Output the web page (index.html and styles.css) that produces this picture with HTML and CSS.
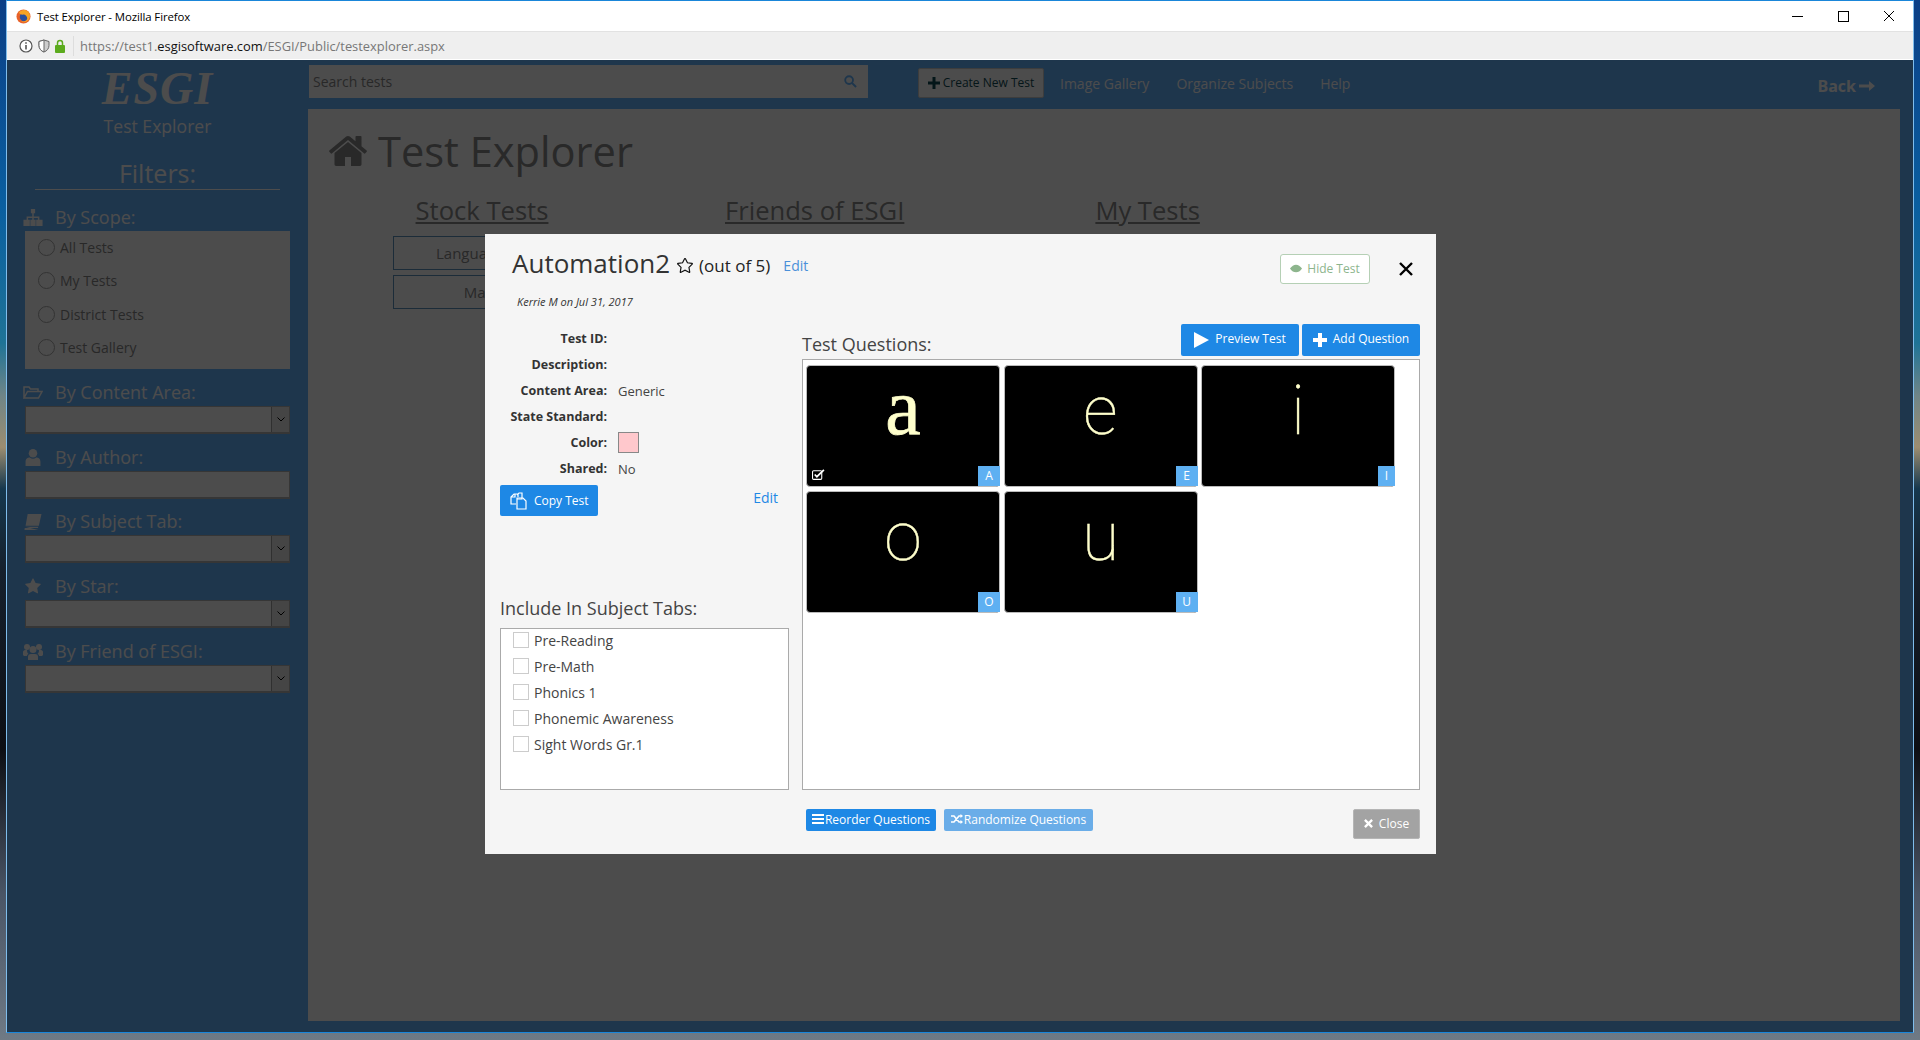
FILE: index.html
```html
<!DOCTYPE html>
<html lang="en">
  <head>
    <meta charset="UTF-8" />
    <meta name="viewport" content="width=device-width, initial-scale=1.0" />
    <title>Test Explorer</title>
    <link rel="stylesheet" href="styles.css">
  </head>
  <body>
    <div class="browser">
      <div class="title-bar">
        <svg class="ff-logo" viewBox="0 0 16 16"><circle cx="8" cy="8" r="7.5" fill="#e8622a"/><circle cx="8.500" cy="8.500" r="4.500" fill="#2a4f9e"/><path d="M3 4c2-3 7-4 10-1 2 2 3 6 0 9-2 2-5 3-8 1 3 1 6 0 7-3 0-3-3-5-5-4-2 0-3-1-4-2z" fill="#f7a325"/></svg>
        <span class="title-text">Test Explorer - Mozilla Firefox</span>
        <div class="win-controls">
          <span class="win-min"></span>
          <span class="win-max"></span>
          <svg class="win-close" viewBox="0 0 10 10"><path d="M0 0l10 10M10 0L0 10" stroke="#000" fill="none"/></svg>
        </div>
      </div>
      <div class="url-bar">
        <svg class="url-icon" viewBox="0 0 14 14" width="14" height="14"><circle cx="7" cy="7" r="6" fill="#fff" stroke="#555" stroke-width="1.200"/><path d="M7 6v4.500M7 3.200v1.500" stroke="#555" stroke-width="1.600"/></svg>
        <svg class="url-icon" viewBox="0 0 12 14" width="12" height="14"><path d="M6 1l5 1.500v4c0 3-2 5.500-5 6.500-3-1-5-3.500-5-6.500v-4z" fill="#ccc" stroke="#666"/><path d="M6 1v12c-3-1-5-3.500-5-6.500v-4z" fill="#fff" stroke="#666"/></svg>
        <svg class="url-icon" viewBox="0 0 10 14" width="10" height="14"><path d="M2.500 6V4a2.500 2.500 0 0 1 5 0v2" fill="none" stroke="#5cab1e" stroke-width="1.500"/><rect y="6" width="10" height="8" rx="1" fill="#5cab1e"/></svg>
        <span class="url-sep"></span>
        <span class="url-text">https://test1.<b>esgisoftware.com</b>/ESGI/Public/testexplorer.aspx</span>
      </div>

      <div class="page">
        <aside class="sidebar">
          <div class="logo">ESGI</div>
          <div class="logo-sub">Test Explorer</div>
          <div class="filters-title">Filters:</div>

          <div class="filter-label filter-first">
            <svg class="f-icon" viewBox="0 0 18 16"><path d="M7 0h4v4H7zM8.300 4h1.400v3H15v3h-1.400V8.400H9.700V10H8.300V8.400H4.400V10H3V7h5.300zM0 10h6v6H0zM6.500 10h5v6h-5zM12 10h6v6h-6z"/></svg>
            By Scope:
          </div>
          <div class="scope-panel">
            <label class="radio-row"><span class="radio"></span>All Tests</label>
            <label class="radio-row"><span class="radio"></span>My Tests</label>
            <label class="radio-row"><span class="radio"></span>District Tests</label>
            <label class="radio-row"><span class="radio"></span>Test Gallery</label>
          </div>

          <div class="filter-label">
            <svg class="f-icon" viewBox="0 0 20 15"><path d="M1 13V2h5l1.500 2H15v2.500M1 13l3.500-6.500H19L15.500 13z" fill="none" stroke="#fff" stroke-width="1.500"/></svg>
            By Content Area:
          </div>
          <div class="select"><span class="select-arrow"><svg viewBox="0 0 8 5" width="8" height="5"><path d="M.5.500L4 4 7.500.500" fill="none" stroke="#000" stroke-width="1"/></svg></span></div>

          <div class="filter-label">
            <svg class="f-icon" viewBox="0 0 16 16"><circle cx="8" cy="4" r="4"/><path d="M1 16v-4c0-3 2-4 4-4 2 1.500 4 1.500 6 0 2 0 4 1 4 4v4z"/></svg>
            By Author:
          </div>
          <div class="text-field"></div>

          <div class="filter-label">
            <svg class="f-icon" viewBox="0 0 18 16"><path d="M4 1h13l-2.500 11H2zM1.500 13H14l-.3 1H1.200l-.2 2h13" fill="#fff"/></svg>
            By Subject Tab:
          </div>
          <div class="select"><span class="select-arrow"><svg viewBox="0 0 8 5" width="8" height="5"><path d="M.5.500L4 4 7.500.500" fill="none" stroke="#000" stroke-width="1"/></svg></span></div>

          <div class="filter-label">
            <svg class="f-icon" viewBox="0 0 1792 1792"><path d="M1728 647q0 22-26 48l-363 354 86 500q1 7 1 20 0 21-10.500 35.500t-30.500 14.500q-19 0-40-12l-449-236-449 236q-22 12-40 12-21 0-31.500-14.500t-10.500-35.500q0-6 2-20l86-500-364-354q-25-27-25-48 0-37 56-46l502-73 225-455q19-41 49-41t49 41l225 455 502 73q56 9 56 46z"/></svg>
            By Star:
          </div>
          <div class="select"><span class="select-arrow"><svg viewBox="0 0 8 5" width="8" height="5"><path d="M.5.500L4 4 7.500.500" fill="none" stroke="#000" stroke-width="1"/></svg></span></div>

          <div class="filter-label">
            <svg class="f-icon" viewBox="0 0 20 17"><circle cx="4" cy="4" r="3"/><circle cx="16" cy="4" r="3"/><circle cx="10" cy="6.500" r="3.500"/><path d="M0 12V9c0-1 1-2 2-2h2c0 2 .5 3 1.500 4-1 0-1.500 1-1.500 2H1zM20 12V9c0-1-1-2-2-2h-2c0 2-.5 3-1.500 4 1 0 1.500 1 1.500 2h3zM5 17v-3c0-2 1-3 3-3h4c2 0 3 1 3 3v3z"/></svg>
            By Friend of ESGI:
          </div>
          <div class="select"><span class="select-arrow"><svg viewBox="0 0 8 5" width="8" height="5"><path d="M.5.500L4 4 7.500.500" fill="none" stroke="#000" stroke-width="1"/></svg></span></div>
        </aside>

        <div class="content-col">
          <div class="top-bar">
            <div class="search-box">
              <span class="search-text">Search tests</span>
              <svg class="search-icon" viewBox="0 0 14 14"><circle cx="5.500" cy="5.500" r="4.200" fill="none" stroke="#67b4fd" stroke-width="2"/><path d="M8.500 8.500L13 13" stroke="#67b4fd" stroke-width="2.200"/></svg>
            </div>
            <a class="create-btn"><svg class="create-plus" viewBox="0 0 12 12"><path d="M4.500 0h3v4.500H12v3H7.500V12h-3V7.500H0v-3h4.500z"/></svg>Create New Test</a>
            <a class="nav-link nav-first">Image Gallery</a>
            <a class="nav-link">Organize Subjects</a>
            <a class="nav-link">Help</a>
            <a class="back-link">Back<svg viewBox="0 0 16 10" width="16" height="10"><path d="M0 3.500h10V0l6 5-6 5V6.500H0z" fill="#fff"/></svg></a>
          </div>
          <main class="main">
            <h1 class="main-title">
              <svg class="home-icon" viewBox="0 0 1792 1792"><path d="M1472 992v480q0 26-19 45t-45 19h-384v-384h-256v384h-384q-26 0-45-19t-19-45v-480q0-1 .5-3t.5-3l575-474 575 474q1 2 1 6zm223-69l-62 74q-8 9-21 11h-3q-13 0-21-7l-692-577-692 577q-12 8-24 7-13-2-21-11l-62-74q-8-10-7-23.500t11-21.500l719-599q32-26 76-26t76 26l244 204v-195q0-14 9-23t23-9h192q14 0 23 9t9 23v408l219 182q10 8 11 21.500t-7 23.500z"/></svg>
              Test Explorer
            </h1>
            <div class="columns">
              <div class="col col-stock">
                <div class="col-title">Stock Tests</div>
                <div class="stock-btn stock-btn-lang">Language</div>
                <div class="stock-btn">Math</div>
              </div>
              <div class="col col-friends"><div class="col-title">Friends of ESGI</div></div>
              <div class="col col-mine"><div class="col-title">My Tests</div></div>
            </div>
          </main>
        </div>

        <div class="overlay"></div>
      </div>

      <div class="modal">
        <div class="modal-head">
          <div class="modal-title">
            <span class="test-name">Automation2</span>
            <svg class="star-outline" viewBox="0 0 1792 1792"><path d="M1728 647q0 22-26 48l-363 354 86 500q1 7 1 20 0 21-10.500 35.500t-30.500 14.500q-19 0-40-12l-449-236-449 236q-22 12-40 12-21 0-31.500-14.500t-10.500-35.500q0-6 2-20l86-500-364-354q-25-27-25-48 0-37 56-46l502-73 225-455q19-41 49-41t49 41l225 455 502 73q56 9 56 46z"/></svg>
            <span class="out-of">(out of 5)</span>
            <a class="edit-title">Edit</a>
          </div>
          <a class="hide-btn"><svg viewBox="0 0 14 10" width="12" height="9"><path d="M0 5c2-3 4.500-4.500 7-4.500S12 2 14 5c-2 3-4.500 4.500-7 4.500S2 8 0 5z" fill="#8db58d"/></svg>Hide Test</a>
          <svg class="modal-x" viewBox="0 0 14 14"><path d="M1 1l12 12M13 1L1 13" stroke="#000" stroke-width="2.400"/></svg>
        </div>
        <div class="byline">Kerrie M on Jul 31, 2017</div>

        <div class="modal-body">
          <div class="left-col">
            <dl class="info">
              <div class="info-row"><dt>Test ID:</dt><dd></dd></div>
              <div class="info-row"><dt>Description:</dt><dd></dd></div>
              <div class="info-row"><dt>Content Area:</dt><dd>Generic</dd></div>
              <div class="info-row"><dt>State Standard:</dt><dd></dd></div>
              <div class="info-row"><dt>Color:</dt><dd><span class="swatch"></span></dd></div>
              <div class="info-row"><dt>Shared:</dt><dd>No</dd></div>
            </dl>
            <div class="copy-row">
              <a class="btn copy-btn"><svg viewBox="0 0 18 18" width="18" height="18"><path d="M6 12H1V5l3-3h4v3M5 2v3H1M7 7h5V1H9L7 3" fill="none" stroke="#fff" stroke-width="1.200"/><path d="M7 6h6l3 3v8H7z" fill="none" stroke="#fff" stroke-width="1.200"/></svg>Copy Test</a>
              <a class="edit-link">Edit</a>
            </div>
            <div class="section-title tabs-title">Include In Subject Tabs:</div>
            <div class="tabs-box">
              <label class="tab-row"><span class="check"></span>Pre-Reading</label>
              <label class="tab-row"><span class="check"></span>Pre-Math</label>
              <label class="tab-row"><span class="check"></span>Phonics 1</label>
              <label class="tab-row"><span class="check"></span>Phonemic Awareness</label>
              <label class="tab-row"><span class="check"></span>Sight Words Gr.1</label>
            </div>
          </div>

          <div class="right-col">
            <div class="questions-head">
              <div class="section-title">Test Questions:</div>
              <div class="question-btns">
                <a class="btn head-btn"><svg viewBox="0 0 15 16" width="15" height="16"><path d="M0 0l15 8-15 8z" fill="#fff"/></svg>Preview Test</a>
                <a class="btn head-btn"><svg viewBox="0 0 14 14" width="14" height="14"><path d="M5 0h4v5h5v4H9v5H5V9H0V5h5z" fill="#fff"/></svg>Add Question</a>
              </div>
            </div>
            <div class="questions-box">
              <div class="card">
                <span class="card-letter letter-serif">a</span>
                <svg class="card-check" viewBox="0 0 12 10"><rect x=".5" y="1.500" width="8.500" height="8" rx="1" fill="none" stroke="#fff"/><path d="M2.500 5l2 2L11 .8" fill="none" stroke="#fff" stroke-width="1.600"/></svg>
                <span class="badge">A</span>
              </div>
              <div class="card"><span class="card-letter">e</span><span class="badge">E</span></div>
              <div class="card"><span class="card-letter">i</span><span class="badge badge-thin">I</span></div>
              <div class="card"><span class="card-letter">o</span><span class="badge">O</span></div>
              <div class="card"><span class="card-letter">u</span><span class="badge">U</span></div>
            </div>
          </div>
        </div>

        <div class="modal-foot">
          <a class="btn foot-btn"><svg viewBox="0 0 12 10" width="12" height="10"><path d="M0 0h12v2H0zM0 4h12v2H0zM0 8h12v2H0z" fill="#fff"/></svg>Reorder Questions</a>
          <a class="btn foot-btn foot-light"><svg viewBox="0 0 12 10" width="12" height="10"><path d="M0 2h3l5 6h2M0 8h3l5-6h2" fill="none" stroke="#fff" stroke-width="1.600"/><path d="M9.500 0L12 2 9.500 4zM9.500 6L12 8l-2.500 2z" fill="#fff"/></svg>Randomize Questions</a>
          <a class="close-btn"><svg viewBox="0 0 10 10" width="9" height="9"><path d="M1 1l8 8M9 1L1 9" stroke="#fff" stroke-width="2.600"/></svg>Close</a>
        </div>
      </div>
    </div>
  </body>
</html>
```

FILE: styles.css
```css
html,
body {
  height: 100%;
}
body {
  margin: 0;
  padding: 0 6px 7px;
  box-sizing: border-box;
  height: 1040px;
  overflow: hidden;
  font-family: 'Open Sans', sans-serif;
  background: linear-gradient(
    to bottom,
    #0b3f86 0%,
    #0a5fa0 20%,
    #1f7396 33%,
    #6f8587 38%,
    #9c8d70 43%,
    #16384e 47%,
    #16202c 55%,
    #0d0f14 72%,
    #4a5566 86%,
    #6f7a85 100%
  );
}
a {
  cursor: pointer;
}
svg {
  flex: none;
}

/* browser chrome */
.browser {
  position: relative;
  height: 1033px;
  box-sizing: border-box;
  display: flex;
  flex-direction: column;
  background-color: #fff;
  border: 1px solid #1a86d9;
  border-left-color: #7fbdec;
  border-right-color: #7fbdec;
}
.title-bar {
  height: 30px;
  flex: none;
  display: flex;
  align-items: center;
  padding-left: 9px;
  background-color: #fff;
}
.ff-logo {
  width: 15px;
  height: 15px;
}
.title-text {
  margin-left: 6px;
  font-size: 11.400px;
  color: #000;
  letter-spacing: -0.1px;
}
.win-controls {
  margin-left: auto;
  display: flex;
  align-items: center;
}
.win-min {
  width: 11px;
  height: 1px;
  background-color: #000;
}
.win-max {
  width: 9px;
  height: 9px;
  margin-left: 35px;
  border: 1px solid #000;
}
.win-close {
  width: 10px;
  height: 10px;
  margin: 0 19px 0 35px;
}
.url-bar {
  height: 28px;
  flex: none;
  display: flex;
  align-items: center;
  padding-left: 12px;
  background-color: #efefef;
  border-top: 1px solid #e2e2e2;
  box-sizing: border-box;
}
.url-icon {
  margin-right: 5px;
}
.url-sep {
  width: 1px;
  height: 20px;
  margin-left: 3px;
  background-color: #ddd;
}
.url-text {
  margin-left: 6px;
  font-size: 12.900px;
  color: #777;
}
.url-text b {
  font-weight: normal;
  color: #111;
}

/* page under the dialog */
.page {
  position: relative;
  flex: 1;
  display: flex;
  margin-top: 1px;
  background-color: #67b4fd;
  min-height: 0;
}
.overlay {
  position: absolute;
  top: 0;
  left: 0;
  right: 0;
  bottom: 0;
  background-color: rgba(0, 0, 0, 0.7);
}
.sidebar {
  width: 301px;
  flex: none;
  box-sizing: border-box;
  padding: 0 18px;
  color: #fff;
}
.logo {
  margin-top: 6px;
  height: 46px;
  line-height: 46px;
  text-align: center;
  font-family: 'Liberation Serif', serif;
  font-style: italic;
  font-weight: bold;
  font-size: 46px;
  letter-spacing: 1px;
}
.logo-sub {
  text-align: center;
  font-size: 17.600px;
  line-height: 24px;
  margin-top: 2px;
}
.filters-title {
  margin: 19px 10px 0;
  text-align: center;
  font-size: 25px;
  line-height: 32px;
  border-bottom: 1px solid #fff;
}
.filter-label {
  display: flex;
  align-items: center;
  height: 27px;
  margin: 9.750px 0 0 -2px;
  font-size: 18px;
  line-height: 27px;
}
.filter-first {
  margin-top: 14px;
}
.f-icon {
  width: 20px;
  height: 17px;
  margin-right: 12px;
  fill: #fff;
}
.scope-panel {
  height: 138px;
  background-color: #fff;
  color: #888;
}
.radio-row {
  display: flex;
  align-items: center;
  height: 33.300px;
  padding: 0 0 0 13px;
  font-size: 14px;
  box-sizing: border-box;
}
.radio {
  width: 15px;
  height: 15px;
  margin-right: 5px;
  border: 1px solid #aaa;
  border-radius: 50%;
}
.select,
.text-field {
  height: 28px;
  box-sizing: border-box;
  border: 1px solid #b5b5b5;
  background-color: #fff;
  display: flex;
  justify-content: flex-end;
  border-bottom-width: 2px;
}
.select-arrow {
  width: 17px;
  display: flex;
  align-items: center;
  justify-content: center;
  background-color: #e6e6e6;
  border-left: 1px solid #a0a0a0;
}
.content-col {
  flex: 1;
  min-width: 0;
  display: flex;
  flex-direction: column;
}
.top-bar {
  height: 49px;
  flex: none;
  box-sizing: border-box;
  padding-bottom: 6px;
  display: flex;
  align-items: center;
  color: #fff;
}
.search-box {
  width: 559px;
  height: 33px;
  margin-left: 1px;
  padding: 0 11px 0 4px;
  box-sizing: border-box;
  display: flex;
  align-items: center;
  justify-content: space-between;
  background-color: #fff;
  color: #888;
  font-size: 14px;
}
.search-icon {
  width: 13px;
  height: 13px;
}
.create-btn {
  width: 126px;
  height: 30px;
  margin: 2px 0 0 50px;
  box-sizing: border-box;
  display: flex;
  align-items: center;
  justify-content: center;
  background-color: #fff;
  border: 1px solid #ccc;
  border-radius: 2px;
  color: #104a54;
  font-size: 12px;
}
.create-plus {
  width: 12px;
  height: 12px;
  margin-right: 3px;
  fill: #104a54;
}
.nav-link {
  margin: 3px 0 0 27px;
  font-size: 14px;
}
.nav-first {
  margin-left: 16px;
}
.back-link {
  margin: 9px 38px 0 auto;
  display: flex;
  align-items: center;
  gap: 3px;
  font-size: 16px;
  font-weight: bold;
}
.main {
  flex: 1;
  margin: 0 13px 11px 0;
  background-color: #fff;
  color: #8a8a8a;
}
.main-title {
  margin: 0;
  padding: 13.500px 0 0 19px;
  display: flex;
  align-items: center;
  font-size: 41.600px;
  font-weight: normal;
  line-height: 57px;
}
.home-icon {
  width: 42px;
  height: 42px;
  margin-right: 9px;
  fill: #8a8a8a;
}
.columns {
  display: flex;
  margin-top: 14.500px;
}
.col-title {
  font-size: 25.600px;
  line-height: 34px;
  text-decoration: underline;
  text-align: center;
}
.col-stock {
  width: 178px;
  margin-left: 85px;
}
.col-friends {
  margin-left: 154px;
}
.col-mine {
  margin-left: 191px;
}
.stock-btn {
  height: 34px;
  margin-top: 5px;
  line-height: 32px;
  box-sizing: border-box;
  text-align: center;
  font-size: 15px;
  border: 1px solid #5f93c0;
}
.col-title + .stock-btn {
  margin-top: 8px;
}
.stock-btn-lang {
  padding-left: 42px;
  text-align: left;
}

/* dialog */
.modal {
  position: absolute;
  top: 233px;
  left: 478px;
  width: 951px;
  height: 620px;
  box-sizing: border-box;
  padding: 0 16px 0 15px;
  background-color: #f5f5f5;
  color: #333;
  display: flex;
  flex-direction: column;
}
.modal-head {
  height: 53px;
  flex: none;
  display: flex;
  align-items: flex-start;
}
.modal-title {
  display: flex;
  align-items: center;
  margin: 11px 0 0 12px;
  height: 36px;
}
.test-name {
  font-size: 26px;
  line-height: 36px;
  color: #333;
}
.star-outline {
  width: 16px;
  height: 16px;
  margin: 5px 6px 0 7px;
  fill: none;
  stroke: #111;
  stroke-width: 130;
}
.out-of {
  font-size: 17px;
  color: #222;
  margin-top: 5px;
}
.edit-title {
  margin: 5px 0 0 13px;
  font-size: 14px;
  color: #4a90d9;
}
.hide-btn {
  width: 90px;
  height: 30px;
  margin: 20px 0 0 auto;
  padding-bottom: 2px;
  box-sizing: border-box;
  display: flex;
  align-items: center;
  justify-content: center;
  gap: 5px;
  background-color: #fff;
  border: 1px solid #b5d0b5;
  border-radius: 3px;
  color: #8db58d;
  font-size: 12px;
}
.modal-x {
  width: 14px;
  height: 14px;
  margin: 28px 7px 0 29px;
}
.byline {
  height: 25px;
  line-height: 30px;
  padding-left: 17px;
  font-size: 11px;
  font-style: italic;
  color: #333;
}
.modal-body {
  display: flex;
  flex: none;
  height: 478px;
}
.left-col {
  width: 289px;
  flex: none;
  margin-right: 13px;
  display: flex;
  flex-direction: column;
}
.info {
  margin: 13.500px 0 0;
}
.info-row {
  display: flex;
  align-items: center;
  height: 26px;
  font-size: 12.500px;
}
.info-row dt {
  width: 107px;
  text-align: right;
  font-weight: bold;
  color: #333;
}
.info-row dd {
  margin: 0 0 0 11px;
  display: flex;
  align-items: center;
  font-size: 13px;
  color: #444;
}
.swatch {
  width: 21px;
  height: 21px;
  box-sizing: border-box;
  background-color: #ffc8cc;
  border: 1px solid #888;
}
.btn {
  display: flex;
  align-items: center;
  box-sizing: border-box;
  background-color: #1e88e5;
  color: #fff;
  border-radius: 2px;
}
.copy-row {
  display: flex;
  align-items: flex-start;
  justify-content: space-between;
  margin-top: 3.500px;
  height: 31px;
}
.copy-btn {
  width: 98px;
  height: 31px;
  padding-left: 10px;
  gap: 6px;
  font-size: 12px;
}
.edit-link {
  margin: 3px 11px 0 0;
  font-size: 14px;
  color: #1e88e5;
}
.section-title {
  font-size: 18px;
  line-height: 24px;
  color: #444;
}
.tabs-title {
  margin-top: 80px;
}
.tabs-box {
  height: 162px;
  margin-top: 8px;
  box-sizing: border-box;
  background-color: #fff;
  border: 1px solid #aaa;
}
.tab-row {
  display: flex;
  align-items: center;
  height: 22px;
  margin-bottom: 4px;
  padding-left: 12px;
  font-size: 14px;
  color: #444;
}
.check {
  width: 16px;
  height: 16px;
  box-sizing: border-box;
  margin-right: 5px;
  background-color: #fff;
  border: 1px solid #ccc;
}
.right-col {
  flex: 1;
  min-width: 0;
  display: flex;
  flex-direction: column;
}
.questions-head {
  display: flex;
  justify-content: space-between;
  align-items: flex-start;
  height: 47px;
  flex: none;
}
.questions-head .section-title {
  margin-top: 20px;
}
.question-btns {
  display: flex;
  gap: 3px;
  margin-top: 12px;
}
.head-btn {
  width: 118px;
  height: 32px;
  padding-bottom: 3px;
  justify-content: center;
  gap: 6px;
  font-size: 12px;
}
.head-btn svg {
  margin-top: 3px;
}
.questions-box {
  height: 431px;
  flex: none;
  box-sizing: border-box;
  padding: 5px 0 0 3px;
  background-color: #fff;
  border: 1px solid #aaa;
  display: grid;
  grid-template-columns: repeat(3, 194px);
  grid-auto-rows: 122px;
  gap: 4px 3.500px;
  align-content: start;
}
.card {
  position: relative;
  background-color: #000;
  border: 1px solid #bbb;
  border-radius: 4px;
  box-sizing: border-box;
  text-align: center;
  color: #ffffcc;
}
.card-letter {
  display: block;
  font-family: Roboto, 'Liberation Sans', sans-serif;
  font-size: 68px;
  line-height: 90px;
  font-weight: 100;
  -webkit-text-stroke: 0.4px #ffffcc;
}
.letter-serif {
  font-family: 'Liberation Serif', serif;
  font-size: 80px;
  line-height: 82px;
  font-weight: normal;
  -webkit-text-stroke: 0.7px #ffffcc;
}
.card-check {
  position: absolute;
  left: 5px;
  bottom: 6px;
  width: 13px;
  height: 11px;
}
.badge {
  position: absolute;
  right: -1px;
  bottom: 0;
  width: 22px;
  height: 20px;
  line-height: 20px;
  background-color: #5eb0f2;
  color: #fff;
  font-size: 12px;
}
.badge-thin {
  width: 17px;
}
.modal-foot {
  display: flex;
  align-items: flex-start;
  padding-left: 306px;
  gap: 8px;
  margin-top: 19px;
}
.foot-btn {
  width: 130px;
  height: 22px;
  padding-bottom: 2px;
  justify-content: center;
  gap: 1px;
  font-size: 12px;
}
.foot-light {
  width: 149px;
  background-color: #6aade8;
}
.close-btn {
  width: 67px;
  height: 30px;
  margin-left: auto;
  padding-bottom: 2px;
  box-sizing: border-box;
  display: flex;
  align-items: center;
  justify-content: center;
  gap: 6px;
  background-color: #a3a3a3;
  border: 1px solid #b5b5b5;
  border-radius: 2px;
  color: #fff;
  font-size: 12px;
}
```
